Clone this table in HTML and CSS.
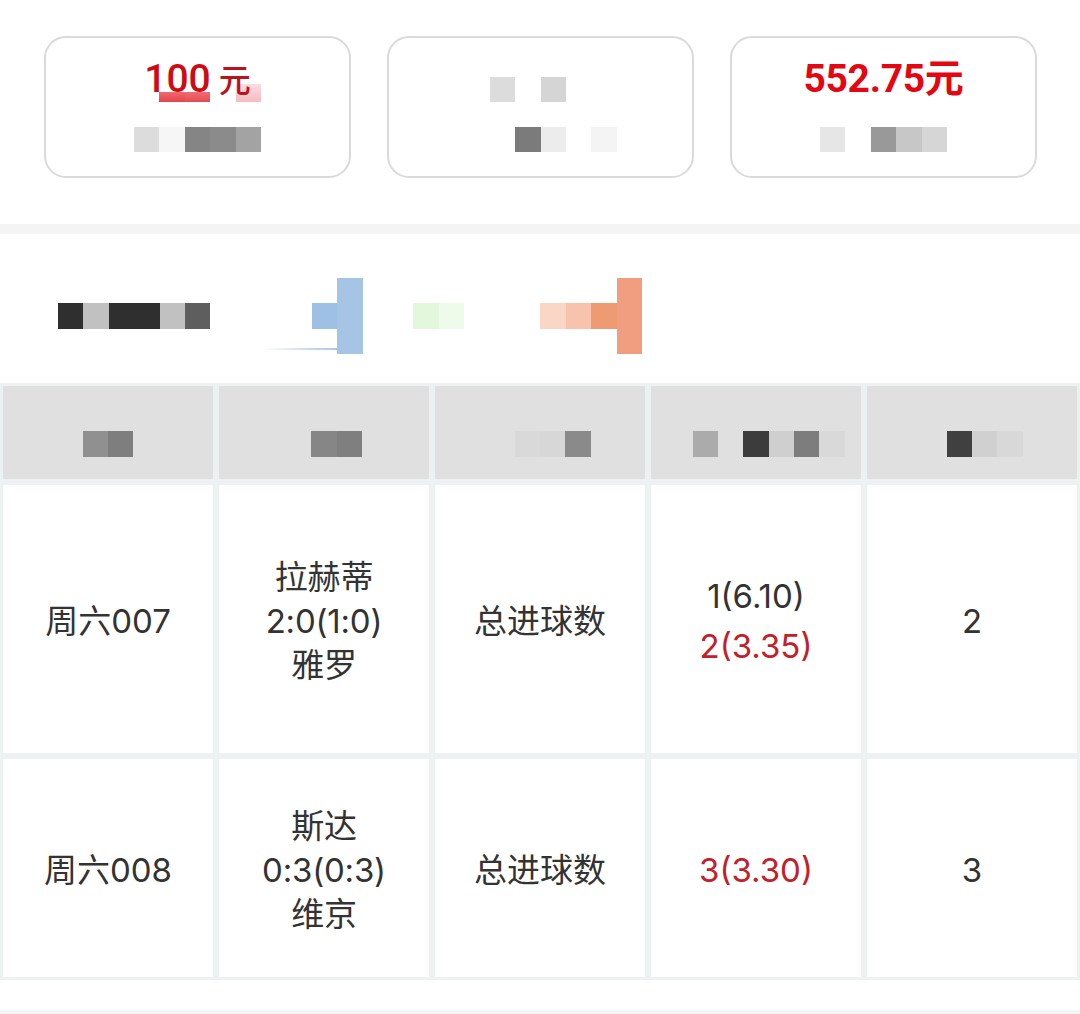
FILE: index.html
```html
<!DOCTYPE html>
<html lang="zh-CN">
<head>
<meta charset="utf-8">
<title>投注详情</title>
<link rel="stylesheet" href="styles.css">
</head>
<body>
<div class="cards">
  <div class="card">
    <div class="amount amount-a"><span class="num">100</span><span class="unit"> 元</span></div>
    <div class="mz mz-under">
      <span class="c"></span><span class="c r1"></span><span class="c r2"></span><span class="c"></span><span class="c r3"></span>
    </div>
    <div class="mz mz-sub">
      <span class="c gdc"></span><span class="c gf6"></span><span class="c g85"></span><span class="c g8b"></span><span class="c ga3"></span>
    </div>
  </div>
  <div class="card">
    <div class="amount amount-blank">
      <div class="mz">
        <span class="c gdc"></span><span class="c"></span><span class="c gd5"></span><span class="c"></span>
      </div>
    </div>
    <div class="mz mz-sub">
      <span class="c"></span><span class="c"></span><span class="c g7b"></span><span class="c gec"></span><span class="c"></span><span class="c gf4"></span>
    </div>
  </div>
  <div class="card">
    <div class="amount amount-b">552.75元</div>
    <div class="mz mz-sub">
      <span class="c ge6"></span><span class="c"></span><span class="c g99"></span><span class="c gc7"></span><span class="c gd6"></span>
    </div>
  </div>
</div>

<div class="band"></div>

<div class="legend">
  <div class="mz mz-legend">
    <span class="c g2f"></span><span class="c gc1"></span><span class="c g2f"></span><span class="c g2f"></span><span class="c gc1"></span><span class="c g5e"></span>
    <span class="c"></span><span class="c"></span><span class="c"></span><span class="c"></span>
    <span class="c b1"></span><span class="c tall b2"></span>
    <span class="c"></span><span class="c"></span>
    <span class="c n1"></span><span class="c n2"></span>
    <span class="c"></span><span class="c"></span><span class="c"></span>
    <span class="c o1"></span><span class="c o2"></span><span class="c o3"></span><span class="c tall o4"></span>
  </div>
</div>

<div class="table">
  <div class="th"><div class="mz"><span class="c g90"></span><span class="c g7e"></span></div></div>
  <div class="th"><div class="mz"><span class="c"></span><span class="c g86"></span><span class="c g7f"></span></div></div>
  <div class="th"><div class="mz"><span class="c"></span><span class="c gda"></span><span class="c gd7"></span><span class="c g8a"></span></div></div>
  <div class="th"><div class="mz"><span class="c"></span><span class="c gab"></span><span class="c"></span><span class="c g3c"></span><span class="c gcf"></span><span class="c g7d"></span><span class="c gda"></span></div></div>
  <div class="th"><div class="mz"><span class="c"></span><span class="c g40"></span><span class="c gd0"></span><span class="c gd8"></span></div></div>

  <div class="td">周六007</div>
  <div class="td"><div class="lines"><span>拉赫蒂</span><span>2:0(1:0)</span><span>雅罗</span></div></div>
  <div class="td">总进球数</div>
  <div class="td"><div class="odds"><span>1(6.10)</span><span class="hit">2(3.35)</span></div></div>
  <div class="td">2</div>

  <div class="td">周六008</div>
  <div class="td"><div class="lines"><span>斯达</span><span>0:3(0:3)</span><span>维京</span></div></div>
  <div class="td">总进球数</div>
  <div class="td"><div class="odds"><span class="hit">3(3.30)</span></div></div>
  <div class="td">3</div>
</div>

<div class="tail"></div>
<div class="band band-bottom"></div>
</body>
</html>
```

FILE: styles.css
```css
* { box-sizing: border-box; }

html, body {
  margin: 0;
  padding: 0;
  background: #ffffff;
}

body {
  width: 1080px;
  font-family: Inter, "Noto Sans CJK SC", sans-serif;
  color: #333333;
}

/* ---------- summary cards ---------- */
.cards {
  display: flex;
  gap: 36px;
  padding: 36px 0 0 44px;
}

.card {
  width: 307px;
  height: 142px;
  border: 2px solid #dadada;
  border-radius: 22px;
  padding-top: 18px;
  display: flex;
  flex-direction: column;
  align-items: center;
  background: #fff;
}

.amount {
  position: relative;
  z-index: 1;
  height: 46px;
  line-height: 46px;
  font-family: Roboto, "Noto Sans CJK SC", sans-serif;
  white-space: nowrap;
}

.amount-a .num {
  font-size: 39px;
  font-weight: 500;
  color: #cf0a14;
}

.amount-a .unit {
  font-size: 32px;
  font-weight: 500;
  color: #b8141c;
}

.amount-b {
  font-size: 39px;
  font-weight: 700;
  color: #e30613;
  letter-spacing: -0.3px;
}

.amount-blank {
  display: flex;
  align-items: flex-end;
}

/* ---------- mosaic blocks ---------- */
.mz {
  display: flex;
  align-items: center;
}

.c {
  display: block;
  width: 25.4px;
  height: 25.4px;
  flex: 0 0 25.4px;
}

.mz-sub {
  margin-top: 25px;
}

.mz-under {
  height: 19px;
  margin-top: -19px;
  align-items: flex-end;
}

.mz-under .c { height: 10px; }
.mz-under .r3 { height: 18px; }

.r1 { background: linear-gradient(#ee6a6f, #e6444a); }
.r2 { background: linear-gradient(#ef6d72, #e64a50); }
.r3 { background: linear-gradient(#f9dde0, #f4bcc1); }

.g2f { background: #2f2f2f; }
.g3c { background: #3c3c3c; }
.g40 { background: #404040; }
.g5e { background: #5e5e5e; }
.g7b { background: #7b7b7b; }
.g7d { background: #7d7d7d; }
.g7e { background: #7e7e7e; }
.g7f { background: #7f7f7f; }
.g85 { background: #858585; }
.g86 { background: #868686; }
.g8a { background: #8a8a8a; }
.g8b { background: #8b8b8b; }
.g90 { background: #909090; }
.g99 { background: #999999; }
.ga3 { background: #a3a3a3; }
.gab { background: #ababab; }
.gc1 { background: #c1c1c1; }
.gc7 { background: #c7c7c7; }
.gcf { background: #cfcfcf; }
.gd0 { background: #d0d0d0; }
.gd5 { background: #d5d5d5; }
.gd6 { background: #d6d6d6; }
.gd7 { background: #d7d7d7; }
.gd8 { background: #d8d8d8; }
.gda { background: #d9d9d9; }
.gdc { background: #dcdcdc; }
.ge6 { background: #e6e6e6; }
.gec { background: #ececec; }
.gf4 { background: #f4f4f4; }
.gf6 { background: #f6f6f6; }

.b1 { background: #9fc0e5; }
.b2 { background: #a6c4e3; }
.n1 { background: #e3f7dd; }
.n2 { background: #eefbea; }
.o1 { background: #f9d6c6; }
.o2 { background: #f8c3ad; }
.o3 { background: #ee9a73; }
.o4 { background: #f09e7f; }

.tall { height: 76px; }

/* ---------- bands ---------- */
.band {
  height: 10px;
  margin-top: 46px;
  background: #f4f4f4;
}

.band-bottom {
  margin-top: 0;
  height: 4px;
}

/* ---------- legend ---------- */
.legend {
  height: 149px;
  padding: 44px 0 0 58px;
}

.b2 { position: relative; }
.b2::before {
  content: "";
  position: absolute;
  right: 100%;
  bottom: 4px;
  width: 75px;
  height: 2px;
  background: linear-gradient(to right, rgba(169, 198, 226, 0), #a9c6e2);
}

/* ---------- table ---------- */
.table {
  display: grid;
  grid-template-columns: repeat(5, 1fr);
  grid-template-rows: 93px 268px 218px;
  gap: 6px;
  padding: 3px;
  background: #eef1f2;
}

.th {
  background: #e0e0e0;
  display: flex;
  align-items: center;
  justify-content: center;
  padding-top: 23px;
}

.td {
  background: #ffffff;
  display: flex;
  align-items: center;
  justify-content: center;
  text-align: center;
  font-size: 33px;
  line-height: 44px;
  color: #333333;
  padding-top: 4px;
}

.lines, .odds {
  display: flex;
  flex-direction: column;
  align-items: center;
}

.lines {
  letter-spacing: -0.2px;
}

.odds {
  gap: 6px;
}

.hit {
  color: #c3202b;
}

.tail {
  height: 30px;
}
```
